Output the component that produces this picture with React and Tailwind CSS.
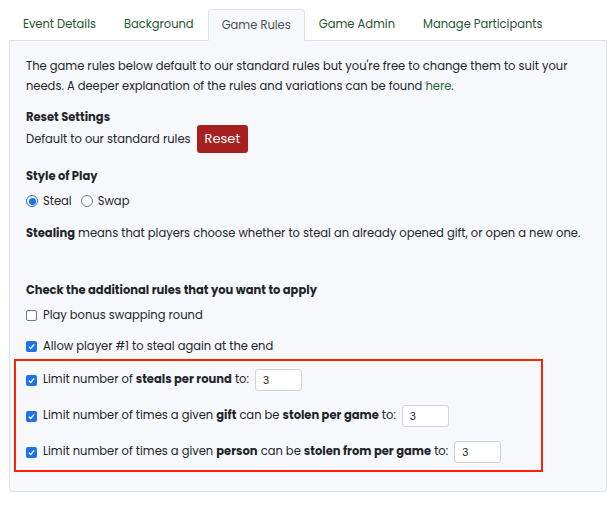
const tabs = ["Event Details", "Background", "Game Rules", "Game Admin", "Manage Participants"];

function Check({ checked }) {
  return (
    <span
      className={`inline-flex w-[11px] h-[11px] rounded-[2px] items-center justify-center shrink-0 ${
        checked ? "bg-[#1a73e8]" : "border border-[#767676] bg-white"
      }`}
    >
      {checked && (
        <svg viewBox="0 0 12 12" className="w-[9px] h-[9px]">
          <path d="M2.5 6.2 L5 8.6 L9.6 3.2" fill="none" stroke="white" strokeWidth="1.8" />
        </svg>
      )}
    </span>
  );
}

function Radio({ checked }) {
  return (
    <span
      className={`inline-flex w-[12px] h-[12px] rounded-full items-center justify-center shrink-0 ${
        checked ? "border border-[#1a73e8] bg-white" : "border border-[#767676] bg-white"
      }`}
    >
      {checked && <span className="w-[7px] h-[7px] rounded-full bg-[#1a73e8]" />}
    </span>
  );
}

function NumBox() {
  return (
    <span className="inline-flex items-center w-[47px] h-[22px] border border-[#ced4da] rounded-[3px] bg-white pl-[7px] text-[11px] font-['Liberation_Sans',sans-serif] text-[#212529]">
      3
    </span>
  );
}

export default function App() {
  return (
    <div className="w-[616px] h-[506px] bg-white pt-[8px] px-[9px] font-['Poppins','Open_Sans',sans-serif] text-[11.5px] text-[#212529]">
      <div className="flex h-[32px] whitespace-nowrap">
        {tabs.map((t) => (
          <div
            key={t}
            className={`px-[13px] pt-[2px] flex items-center border rounded-t-[4px] ${
              t === "Game Rules"
                ? "bg-[#f7f8fc] border-[#dee2e6] border-b-[#f7f8fc] text-[#495057] relative top-[1px] z-10"
                : "border-transparent text-[#1e5631]"
            }`}
          >
            {t}
          </div>
        ))}
      </div>
      <div className="border border-[#dee2e6] rounded-b-[4px] bg-[#f7f8fc] h-[452px] pt-[15px] px-[4px]">
        <div className="px-[12px] leading-[20px]">
          <p>
            The game rules below default to our standard rules but you're free to change them to suit your
            needs. A deeper explanation of the rules and variations can be found{" "}
            <span className="text-[#1e6b34]">here</span>.
          </p>
          <p className="font-bold mt-[11px]">Reset Settings</p>
          <div className="flex items-center gap-[6px] -mt-[2px]">
            <span>Default to our standard rules</span>
            <span className="bg-[#a72020] text-white text-[13px] rounded-[3px] px-[8px] h-[28px] flex items-center">
              Reset
            </span>
          </div>
          <p className="font-bold mt-[13px]">Style of Play</p>
          <div className="flex items-center mt-[5px] h-[20px]">
            <Radio checked />
            <span className="ml-[5px]">Steal</span>
            <span className="ml-[9px] flex"><Radio /></span>
            <span className="ml-[5px]">Swap</span>
          </div>
          <p className="mt-[12px]">
            <b>Stealing</b> means that players choose whether to steal an already opened gift, or open a new one.
          </p>
          <p className="font-bold mt-[37px]">Check the additional rules that you want to apply</p>
          <div className="flex items-center gap-[6px] mt-[5px] h-[20px]">
            <Check />
            <span>Play bonus swapping round</span>
          </div>
          <div className="flex items-center gap-[6px] mt-[11px] h-[20px]">
            <Check checked />
            <span>Allow player #1 to steal again at the end</span>
          </div>
        </div>
        <div className="mr-[59px] mt-[3px] border-2 border-[#ff2200] h-[113px] px-[10px] pt-[8px] flex flex-col gap-[14px] whitespace-nowrap">
          <div className="flex items-center gap-[6px] h-[22px]">
            <Check checked />
            <span>
              Limit number of <b>steals per round</b> to:
            </span>
            <NumBox />
          </div>
          <div className="flex items-center gap-[6px] h-[22px]">
            <Check checked />
            <span>
              Limit number of times a given <b>gift</b> can be <b>stolen per game</b> to:
            </span>
            <NumBox />
          </div>
          <div className="flex items-center gap-[6px] h-[22px]">
            <Check checked />
            <span>
              Limit number of times a given <b>person</b> can be <b>stolen from per game</b> to:
            </span>
            <NumBox />
          </div>
        </div>
      </div>
    </div>
  );
}
